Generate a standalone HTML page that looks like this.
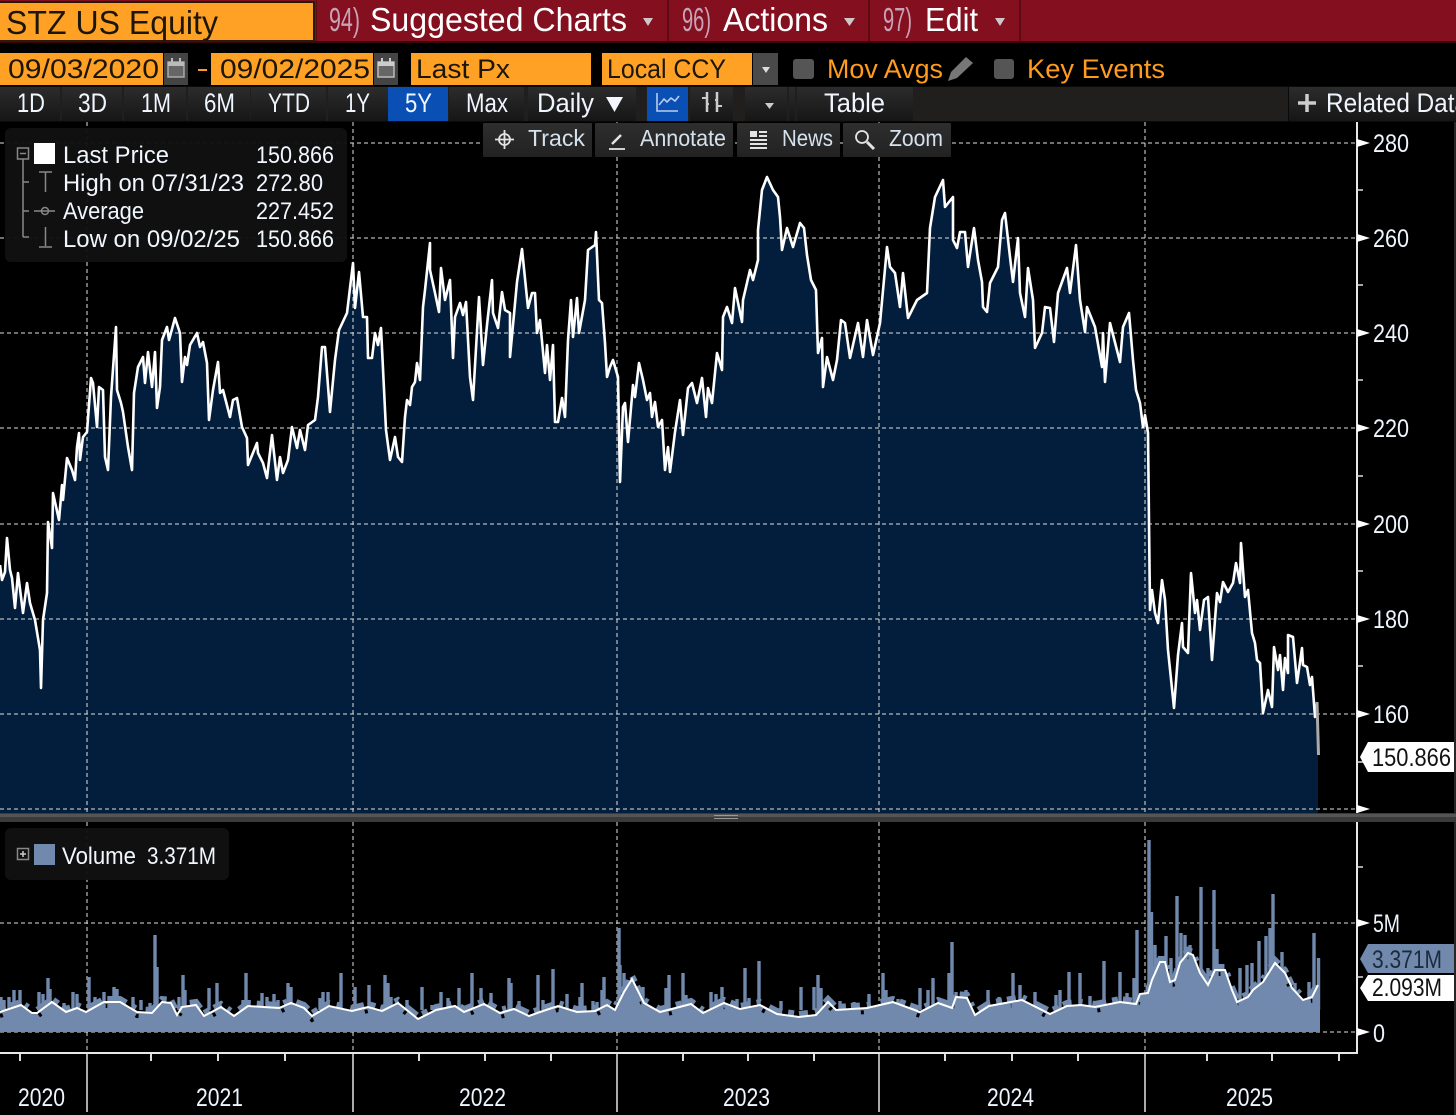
<!DOCTYPE html>
<html><head><meta charset="utf-8"><title>STZ US Equity</title>
<style>
html,body{margin:0;padding:0;background:#000;width:1456px;height:1115px;overflow:hidden}
svg{display:block}
text{font-family:"Liberation Sans",sans-serif}
.w{fill:#f4f8ff}
.o{fill:#1b1608;font-size:27px}
.a{fill:#ff9c1e;font-size:27px}
.t{fill:#fff;font-size:33px}
.p{fill:#c8a2b6;font-size:33px}
.b{fill:#f0f6ff;font-size:27px}
.k{fill:#d5e2ee;font-size:23px}
.l{fill:#f2f7ff;font-size:24px}
.x{fill:#eef5ff;font-size:25px}
</style></head><body>
<svg width="1456" height="1115" viewBox="0 0 1456 1115" xmlns="http://www.w3.org/2000/svg">
<defs>
<linearGradient id="g" x1="0" y1="0" x2="0" y2="1"><stop offset="0" stop-color="#2c2c2c"/><stop offset="1" stop-color="#161616"/></linearGradient>
<linearGradient id="h" x1="0" y1="0" x2="0" y2="1"><stop offset="0" stop-color="#2e2e2e"/><stop offset="1" stop-color="#222"/></linearGradient>
<polyline id="ma" fill="none" points="0,1012 21,1005 32,1013 37,1013 52,1002 66,1012 77,1008 86,1012 104,1002 120,1002 137,1012 152,1013 162,1002 171,1003 177,1015 182,1007 196,1005 204,1016 221,1007 234,1016 248,1006 279,1008 291,1003 304,1008 312,1016 329,1006 352,1011 368,1007 382,1011 398,1003 418,1019 436,1010 455,1006 464,1012 484,1004 500,1013 514,1009 529,1016 540,1012 558,1006 577,1012 595,1011 607,1005 615,1010 624,992 632,979 644,1003 660,1012 691,1004 703,1013 724,1003 740,1009 760,1005 777,1014 799,1017 816,1015 828,1002 836,1010 867,1008 893,1002 920,1012 938,1003 952,1008 956,997 967,998 975,1015 989,1006 1022,1000 1050,1014 1067,1006 1081,1005 1095,1007 1120,1002 1136,1004 1140,994 1148,993 1152,980 1160,962 1165,962 1170,982 1175,980 1180,963 1188,953 1193,955 1200,973 1208,985 1215,970 1225,970 1232,990 1237,1002 1248,997 1253,990 1263,982 1275,963 1285,973 1292,988 1303,1000 1312,997 1318,985"/>
</defs>
<rect width="1456" height="1115" fill="#000"/>

<!-- price fill -->
<polygon fill="#031e3c" points="0,813 0,565 2,580 5,572 7,538 10,570 12,578 15,608 18,573 23,613 27,583 30,603 35,620 40,650 41,688 43,620 47,593 48,522 52,548 53,493 59,520 62,485 63,500 67,458 72,470 75,480 77,447 79,433 80,460 83,437 87,432 91,378 93,383 97,427 99,387 103,390 105,457 108,470 111,397 116,327 117,390 121,403 123,412 128,447 132,470 134,393 138,367 143,357 145,383 148,352 152,387 155,352 157,408 160,387 162,340 167,327 169,340 175,318 180,333 182,382 185,357 187,365 190,345 197,333 200,347 203,342 207,363 209,420 213,390 218,362 220,393 223,390 230,417 233,400 237,398 242,427 247,438 248,465 257,443 258,453 263,463 267,478 272,435 277,480 280,457 283,473 288,460 292,427 297,448 300,430 305,450 308,425 315,420 318,397 322,347 325,347 330,412 335,360 339,330 347,313 353,263 355,308 359,272 363,317 367,317 368,358 372,358 375,333 378,345 381,328 386,430 390,460 395,437 398,457 402,462 405,417 407,400 410,405 412,387 415,382 417,363 420,380 423,307 425,290 430,243 430,270 435,293 439,312 441,268 445,300 450,280 453,358 455,317 460,303 463,315 466,302 470,377 473,400 479,297 483,365 487,325 492,280 493,313 498,328 502,292 505,310 510,313 510,357 517,282 522,249 528,308 532,293 535,293 537,333 540,320 545,373 547,345 550,380 553,345 555,422 558,422 562,398 565,417 568,340 571,300 573,337 577,298 579,333 585,300 588,250 595,245 596,232 599,300 602,303 605,343 607,377 610,367 613,360 618,377 620,482 623,407 625,403 628,442 633,385 635,397 639,363 643,380 647,400 650,393 652,417 655,402 658,427 662,420 665,470 668,447 670,472 675,432 680,400 683,435 688,388 692,383 697,403 702,378 706,417 708,388 712,403 717,353 722,370 723,317 727,307 732,323 735,288 742,322 743,300 750,270 753,280 758,260 758,230 762,190 767,177 773,190 778,197 780,217 782,250 787,228 793,247 800,223 804,228 807,255 811,280 816,290 818,353 822,338 823,387 827,357 833,380 837,360 841,320 845,323 850,358 858,323 863,357 867,320 873,355 880,323 887,247 890,267 895,273 900,307 903,273 908,318 917,300 927,293 930,228 935,197 943,180 945,207 953,197 953,240 957,248 960,232 965,232 968,267 974,228 978,260 982,282 983,307 987,312 990,283 998,267 1002,220 1005,213 1010,257 1013,282 1018,238 1020,293 1025,317 1028,268 1033,300 1035,348 1042,333 1045,307 1050,308 1054,342 1058,293 1067,268 1070,293 1076,245 1080,300 1085,332 1087,307 1095,327 1102,367 1103,333 1105,382 1110,323 1120,362 1123,327 1129,313 1133,360 1136,390 1140,403 1143,427 1145,415 1148,433 1150,610 1152,590 1155,613 1158,623 1162,580 1165,600 1168,650 1174,708 1178,655 1182,623 1183,647 1188,653 1191,573 1195,613 1197,600 1200,630 1204,600 1208,597 1212,660 1217,593 1220,602 1223,582 1228,592 1233,583 1236,563 1240,583 1241,543 1245,597 1248,590 1252,633 1255,643 1257,660 1260,663 1263,713 1268,690 1272,707 1274,647 1278,670 1280,655 1283,690 1285,658 1288,673 1288,635 1293,637 1297,683 1302,648 1303,665 1307,667 1310,685 1312,677 1315,717 1317,702 1318,755 1318,813"/>

<!-- grid -->
<g fill="none" stroke="#d0d0d0" stroke-opacity=".72" stroke-width="1.5" stroke-dasharray="4 3">
<path d="M0 143H1357M0 238H1357M0 333H1357M0 428H1357M0 524H1357M0 619H1357M0 714H1357M0 809H1357"/>
<path d="M87 122V813M353 122V813M617 122V813M879 122V813M1145 122V813"/>
<path d="M0 923H1357M0 1032H1357"/>
<path d="M87 822V1053M353 822V1053M617 822V1053M879 822V1053M1145 822V1053"/>
</g>

<!-- price line -->
<polyline fill="none" stroke="#fff" stroke-width="2.6" stroke-linejoin="round" points="0,565 2,580 5,572 7,538 10,570 12,578 15,608 18,573 23,613 27,583 30,603 35,620 40,650 41,688 43,620 47,593 48,522 52,548 53,493 59,520 62,485 63,500 67,458 72,470 75,480 77,447 79,433 80,460 83,437 87,432 91,378 93,383 97,427 99,387 103,390 105,457 108,470 111,397 116,327 117,390 121,403 123,412 128,447 132,470 134,393 138,367 143,357 145,383 148,352 152,387 155,352 157,408 160,387 162,340 167,327 169,340 175,318 180,333 182,382 185,357 187,365 190,345 197,333 200,347 203,342 207,363 209,420 213,390 218,362 220,393 223,390 230,417 233,400 237,398 242,427 247,438 248,465 257,443 258,453 263,463 267,478 272,435 277,480 280,457 283,473 288,460 292,427 297,448 300,430 305,450 308,425 315,420 318,397 322,347 325,347 330,412 335,360 339,330 347,313 353,263 355,308 359,272 363,317 367,317 368,358 372,358 375,333 378,345 381,328 386,430 390,460 395,437 398,457 402,462 405,417 407,400 410,405 412,387 415,382 417,363 420,380 423,307 425,290 430,243 430,270 435,293 439,312 441,268 445,300 450,280 453,358 455,317 460,303 463,315 466,302 470,377 473,400 479,297 483,365 487,325 492,280 493,313 498,328 502,292 505,310 510,313 510,357 517,282 522,249 528,308 532,293 535,293 537,333 540,320 545,373 547,345 550,380 553,345 555,422 558,422 562,398 565,417 568,340 571,300 573,337 577,298 579,333 585,300 588,250 595,245 596,232 599,300 602,303 605,343 607,377 610,367 613,360 618,377 620,482 623,407 625,403 628,442 633,385 635,397 639,363 643,380 647,400 650,393 652,417 655,402 658,427 662,420 665,470 668,447 670,472 675,432 680,400 683,435 688,388 692,383 697,403 702,378 706,417 708,388 712,403 717,353 722,370 723,317 727,307 732,323 735,288 742,322 743,300 750,270 753,280 758,260 758,230 762,190 767,177 773,190 778,197 780,217 782,250 787,228 793,247 800,223 804,228 807,255 811,280 816,290 818,353 822,338 823,387 827,357 833,380 837,360 841,320 845,323 850,358 858,323 863,357 867,320 873,355 880,323 887,247 890,267 895,273 900,307 903,273 908,318 917,300 927,293 930,228 935,197 943,180 945,207 953,197 953,240 957,248 960,232 965,232 968,267 974,228 978,260 982,282 983,307 987,312 990,283 998,267 1002,220 1005,213 1010,257 1013,282 1018,238 1020,293 1025,317 1028,268 1033,300 1035,348 1042,333 1045,307 1050,308 1054,342 1058,293 1067,268 1070,293 1076,245 1080,300 1085,332 1087,307 1095,327 1102,367 1103,333 1105,382 1110,323 1120,362 1123,327 1129,313 1133,360 1136,390 1140,403 1143,427 1145,415 1148,433 1150,610 1152,590 1155,613 1158,623 1162,580 1165,600 1168,650 1174,708 1178,655 1182,623 1183,647 1188,653 1191,573 1195,613 1197,600 1200,630 1204,600 1208,597 1212,660 1217,593 1220,602 1223,582 1228,592 1233,583 1236,563 1240,583 1241,543 1245,597 1248,590 1252,633 1255,643 1257,660 1260,663 1263,713 1268,690 1272,707 1274,647 1278,670 1280,655 1283,690 1285,658 1288,673 1288,635 1293,637 1297,683 1302,648 1303,665 1307,667 1310,685 1312,677 1315,717 1317,702"/>
<path d="M1317 702L1318.5 755" stroke="#aaa" stroke-width="3" fill="none"/>

<!-- volume body -->
<polygon fill="#7089ad" points="0,1032 0,1012 21,1005 32,1013 37,1013 52,1002 66,1012 77,1008 86,1012 104,1002 120,1002 137,1012 152,1013 162,1002 171,1003 177,1015 182,1007 196,1005 204,1016 221,1007 234,1016 248,1006 279,1008 291,1003 304,1008 312,1016 329,1006 352,1011 368,1007 382,1011 398,1003 418,1019 436,1010 455,1006 464,1012 484,1004 500,1013 514,1009 529,1016 540,1012 558,1006 577,1012 595,1011 607,1005 615,1010 624,992 632,979 644,1003 660,1012 691,1004 703,1013 724,1003 740,1009 760,1005 777,1014 799,1017 816,1015 828,1002 836,1010 867,1008 893,1002 920,1012 938,1003 952,1008 956,997 967,998 975,1015 989,1006 1022,1000 1050,1014 1067,1006 1081,1005 1095,1007 1120,1002 1136,1004 1140,994 1148,993 1152,980 1160,962 1165,962 1170,982 1175,980 1180,963 1188,953 1193,955 1200,973 1208,985 1215,970 1225,970 1232,990 1237,1002 1248,997 1253,990 1263,982 1275,963 1285,973 1292,988 1303,1000 1312,997 1318,985 1320,985 1320,1032"/>
<use href="#ma" transform="translate(0,-3)" stroke="#7089ad" stroke-width="6" stroke-dasharray="6 5 9 7 4 10 14 6"/>
<use href="#ma" transform="translate(0,4)" stroke="#000" stroke-width="4" stroke-dasharray="3 40 3 73 3 31 3 55"/>
<path fill="none" stroke="#7089ad" stroke-width="3.4" d="M1 1010V997M4 1010V1000M9 1010V997M14 1010V990M20 1010V990M39 1010V992M43 1010V994M48 1010V978M50 1010V989M64 1010V1003M73 1010V992M77 1010V994M89 1010V977M95 1010V997M104 1010V992M114 1010V987M117 1010V989M133 1010V997M141 1010V1000M150 1010V1003M155 1010V935M157 1010V967M179 1010V997M183 1010V975M185 1010V990M209 1010V988M217 1010V983M243 1010V1000M246 1010V973M262 1010V993M267 1010V997M274 1010V994M278 1010V1000M288 1010V983M291 1010V987M320 1010V998M323 1010V992M328 1010V992M341 1010V973M355 1010V987M369 1010V985M385 1010V975M388 1010V983M391 1010V997M407 1010V1000M422 1010V987M432 1010V1005M441 1010V992M448 1010V998M459 1010V988M472 1010V973M481 1010V988M491 1010V993M509 1010V978M511 1010V983M519 1010V1001M538 1010V975M543 1010V1000M553 1010V969M567 1010V994M580 1010V997M582 1010V983M593 1010V1001M597 1010V1002M602 1010V990M604 1010V977M619 1010V928M620 1010V965M624 1010V973M628 1010V980M643 1010V987M666 1010V988M669 1010V975M683 1010V973M686 1010V995M711 1010V992M716 1010V994M722 1010V987M737 1010V999M745 1010V968M749 1010V998M759 1010V961M781 1010V1001M801 1010V987M814 1010V987M818 1010V975M821 1010V988M840 1010V1001M854 1010V1002M869 1010V994M883 1010V973M886 1010V990M898 1010V999M920 1010V988M928 1010V990M933 1010V978M949 1010V973M952 1010V942M956 1010V992M966 1010V990M988 1010V990M999 1010V997M1009 1010V1000M1013 1010V973M1020 1010V985M1035 1010V992M1056 1010V995M1060 1010V990M1069 1010V972M1080 1010V973M1090 1010V996M1104 1010V961M1120 1010V972M1127 1010V993M1134 1010V978M1137 1010V930M1149 1010V840M1151.5 1010V912M1155 1010V945M1158 1010V958M1166 1010V936M1171 1010V958M1177 1010V896M1181 1010V933M1185 1010V935M1190 1010V945M1201 1010V887M1208 1010V968M1214 1010V890M1217 1010V949M1223 1010V980M1240 1010V968M1247 1010V965M1252 1010V963M1259 1010V941M1266 1010V936M1270 1010V928M1273 1010V894M1282 1010V952M1295 1010V983M1309 1010V982M1314 1010V933M1318.5 1010V958"/>
<use href="#ma" stroke="#fff" stroke-width="2"/>

<!-- axes -->
<rect x="1356" y="122" width="2" height="692" fill="#e8e8e8"/>
<rect x="1356" y="822" width="2" height="232" fill="#e8e8e8"/>
<rect x="0" y="1052" width="1358" height="2" fill="#e8e8e8"/>
<path fill="#fff" d="M1357 139l13 4-13 4zM1357 234l13 4-13 4zM1357 329l13 4-13 4zM1357 424l13 4-13 4zM1357 520l13 4-13 4zM1357 615l13 4-13 4zM1357 710l13 4-13 4zM1357 805l13 4-13 4zM1357 919l13 4-13 4zM1357 1028l13 4-13 4z"/>
<path stroke="#ddd" stroke-width="1.5" d="M1357 190h6M1357 285h6M1357 380h6M1357 476h6M1357 571h6M1357 666h6M1357 762h6M1357 867h6M1357 977h6"/>
<path stroke="#ddd" stroke-width="2" d="M20 1054v7M151 1054v7M218 1054v7M285 1054v7M419 1054v7M485 1054v7M551 1054v7M683 1054v7M748 1054v7M814 1054v7M945 1054v7M1012 1054v7M1078 1054v7M1207 1054v7M1272 1054v7M1339 1054v7"/>
<path stroke="#aaa" stroke-width="2" d="M87 1054v58M353 1054v58M617 1054v58M879 1054v58M1145 1054v58"/>
<rect x="1454" y="122" width="2" height="993" fill="#262626"/>

<!-- right labels -->
<g class="x">
<text class="x" x="1373" y="152" textLength="36" lengthAdjust="spacingAndGlyphs">280</text>
<text class="x" x="1373" y="247" textLength="36" lengthAdjust="spacingAndGlyphs">260</text>
<text class="x" x="1373" y="342" textLength="36" lengthAdjust="spacingAndGlyphs">240</text>
<text class="x" x="1373" y="437" textLength="36" lengthAdjust="spacingAndGlyphs">220</text>
<text class="x" x="1373" y="533" textLength="36" lengthAdjust="spacingAndGlyphs">200</text>
<text class="x" x="1373" y="628" textLength="36" lengthAdjust="spacingAndGlyphs">180</text>
<text class="x" x="1373" y="723" textLength="36" lengthAdjust="spacingAndGlyphs">160</text>
<text class="x" x="1373" y="932" textLength="27" lengthAdjust="spacingAndGlyphs">5M</text>
<text class="x" x="1373" y="1042" textLength="12" lengthAdjust="spacingAndGlyphs">0</text>
</g>
<polygon fill="#fff" points="1360,757 1368,742 1454,742 1454,772 1368,772"/>
<text x="1372" y="766" font-size="25" fill="#111" textLength="79" lengthAdjust="spacingAndGlyphs">150.866</text>
<polygon fill="#7089ad" points="1360,959 1368,944 1454,944 1454,973 1368,973"/>
<text x="1372" y="968" font-size="25" fill="#1c2a3e" textLength="70" lengthAdjust="spacingAndGlyphs">3.371M</text>
<polygon fill="#fff" points="1360,988 1368,975 1454,975 1454,1001 1368,1001"/>
<text x="1372" y="996" font-size="25" fill="#111" textLength="70" lengthAdjust="spacingAndGlyphs">2.093M</text>

<!-- year labels -->
<text class="x" x="18" y="1106" textLength="47" lengthAdjust="spacingAndGlyphs">2020</text>
<text class="x" x="196" y="1106" textLength="47" lengthAdjust="spacingAndGlyphs">2021</text>
<text class="x" x="459" y="1106" textLength="47" lengthAdjust="spacingAndGlyphs">2022</text>
<text class="x" x="723" y="1106" textLength="47" lengthAdjust="spacingAndGlyphs">2023</text>
<text class="x" x="987" y="1106" textLength="47" lengthAdjust="spacingAndGlyphs">2024</text>
<text class="x" x="1226" y="1106" textLength="47" lengthAdjust="spacingAndGlyphs">2025</text>

<!-- splitter -->
<rect x="0" y="813" width="1456" height="9" fill="#3a3a3a"/>
<rect x="0" y="814" width="1456" height="3" fill="#555"/>
<path stroke="#999" d="M714 815.5h24M714 818.5h24"/>

<!-- legend -->
<rect x="5" y="128" width="342" height="134" rx="6" fill="#111" fill-opacity=".96"/>
<g fill="none" stroke="#888" stroke-width="1.5">
<rect x="17.5" y="148" width="11" height="11"/><path d="M20 153.5h6M23 159v78M23 182h6M23 211h6M23 237h6"/>
<path d="M39 172h13M45.5 172v20"/>
<path d="M34 211h21"/><circle cx="45" cy="211" r="3.5"/>
<path d="M45.5 227v19M39 247h13"/>
</g>
<rect x="34" y="143" width="21" height="21" fill="#fff"/>
<text class="l" x="63" y="163" textLength="106" lengthAdjust="spacingAndGlyphs">Last Price</text>
<text class="l" x="63" y="191" textLength="181" lengthAdjust="spacingAndGlyphs">High on 07/31/23</text>
<text class="l" x="63" y="219" textLength="81" lengthAdjust="spacingAndGlyphs">Average</text>
<text class="l" x="63" y="247" textLength="177" lengthAdjust="spacingAndGlyphs">Low on 09/02/25</text>
<text class="l" x="256" y="163" textLength="78" lengthAdjust="spacingAndGlyphs">150.866</text>
<text class="l" x="256" y="191" textLength="67" lengthAdjust="spacingAndGlyphs">272.80</text>
<text class="l" x="256" y="219" textLength="78" lengthAdjust="spacingAndGlyphs">227.452</text>
<text class="l" x="256" y="247" textLength="78" lengthAdjust="spacingAndGlyphs">150.866</text>

<!-- volume legend -->
<rect x="5" y="828" width="224" height="52" rx="6" fill="#111" fill-opacity=".96"/>
<rect x="17.5" y="848.5" width="11" height="11" fill="none" stroke="#888" stroke-width="1.5"/>
<path stroke="#ccc" stroke-width="1.5" d="M20 854h6M23 851v6"/>
<rect x="34" y="844" width="21" height="21" fill="#7089ad"/>
<text class="l" x="62" y="864" textLength="74" lengthAdjust="spacingAndGlyphs">Volume</text>
<text class="l" x="147" y="864" textLength="69" lengthAdjust="spacingAndGlyphs">3.371M</text>

<!-- top bar -->
<rect x="0" y="0" width="1456" height="43" fill="#840f1f"/>
<rect x="316" y="0" width="1" height="43" fill="#5c0a14"/>
<rect x="667" y="0" width="2" height="41" fill="#5c0a14"/>
<rect x="868" y="0" width="2" height="41" fill="#5c0a14"/>
<rect x="1019" y="0" width="2" height="41" fill="#5c0a14"/>
<rect x="0" y="41" width="1456" height="2" fill="#3a060c"/>
<rect x="-1" y="2" width="315" height="39" fill="#ffa124" stroke="#2a1a05" stroke-width="2"/>
<text x="6" y="34" font-size="33" fill="#1b1608" textLength="212" lengthAdjust="spacingAndGlyphs">STZ US Equity</text>
<text class="p" x="329" y="31" textLength="31" lengthAdjust="spacingAndGlyphs">94)</text>
<text class="t" x="370" y="31" textLength="257" lengthAdjust="spacingAndGlyphs">Suggested Charts</text>
<text class="p" x="682" y="31" textLength="29" lengthAdjust="spacingAndGlyphs">96)</text>
<text class="t" x="723" y="31" textLength="105" lengthAdjust="spacingAndGlyphs">Actions</text>
<text class="p" x="883" y="31" textLength="29" lengthAdjust="spacingAndGlyphs">97)</text>
<text class="t" x="925" y="31" textLength="53" lengthAdjust="spacingAndGlyphs">Edit</text>
<path fill="#d0c8c8" d="M643 18h10l-5 8zM844 18h11l-5.500 8zM995 18h10l-5 8z"/>

<!-- row 2 -->
<rect x="0" y="53" width="163" height="32" fill="#ffa124"/>
<rect x="211" y="53" width="162" height="32" fill="#ffa124"/>
<rect x="411" y="53" width="180" height="32" fill="#ffa124"/>
<rect x="602" y="53" width="150" height="32" fill="#ffa124"/>
<rect x="164" y="53" width="24" height="32" fill="#444"/>
<rect x="374" y="53" width="24" height="32" fill="#444"/>
<rect x="753" y="53" width="25" height="32" fill="#4a4a4a"/>
<g>
<rect x="168" y="62" width="16" height="15" fill="#666" stroke="#aaa" stroke-width="1.5"/><rect x="168" y="62" width="16" height="4" fill="#bbb"/><path stroke="#bbb" stroke-width="2" d="M172 58v4M180 58v4"/>
<rect x="378" y="62" width="16" height="15" fill="#666" stroke="#bbb" stroke-width="1.5"/><rect x="378" y="62" width="16" height="4" fill="#ccc"/><path stroke="#ccc" stroke-width="2" d="M382 58v4M390 58v4"/>
</g>
<path fill="#ddd" d="M762 67h8l-4 6z"/>
<rect x="198" y="69" width="9" height="2" fill="#ff9c1e"/>
<text class="o" x="8" y="78" textLength="151" lengthAdjust="spacingAndGlyphs">09/03/2020</text>
<text class="o" x="220" y="78" textLength="150" lengthAdjust="spacingAndGlyphs">09/02/2025</text>
<text class="o" x="416" y="78" textLength="94" lengthAdjust="spacingAndGlyphs">Last Px</text>
<text class="o" x="607" y="78" textLength="119" lengthAdjust="spacingAndGlyphs">Local CCY</text>
<rect x="793" y="59" width="21" height="20" rx="3" fill="#555"/>
<rect x="994" y="59" width="20" height="20" rx="3" fill="#555"/>
<text class="a" x="827" y="78" textLength="116" lengthAdjust="spacingAndGlyphs">Mov Avgs</text>
<text class="a" x="1027" y="78" textLength="138" lengthAdjust="spacingAndGlyphs">Key Events</text>
<path fill="#777" d="M966 57l7 6-16 15-9 3 3-9z"/>

<!-- row 3 -->
<rect x="0" y="86" width="1456" height="36" fill="#0a0a0a"/>
<rect x="0" y="87" width="1288" height="34" fill="#201f1d"/>
<g fill="url(#g)">
<rect x="0" y="87" width="60" height="34"/><rect x="62" y="87" width="60" height="34"/><rect x="124" y="87" width="62" height="34"/><rect x="188" y="87" width="62" height="34"/><rect x="251" y="87" width="75" height="34"/><rect x="328" y="87" width="60" height="34"/>
<rect x="449" y="87" width="75" height="34"/><rect x="528" y="87" width="108" height="34"/><rect x="690" y="87" width="43" height="34"/><rect x="745" y="87" width="42" height="34"/><rect x="789" y="87" width="6" height="34"/><rect x="797" y="87" width="116" height="34"/><rect x="1289" y="87" width="167" height="34"/>
</g>
<rect x="388" y="87" width="60" height="34" fill="#0a50b4"/>
<rect x="647" y="87" width="41" height="34" fill="#0a50b4"/>
<g transform="translate(0,-1)">
<text class="b" x="17" y="113" textLength="28" lengthAdjust="spacingAndGlyphs">1D</text>
<text class="b" x="78" y="113" textLength="29" lengthAdjust="spacingAndGlyphs">3D</text>
<text class="b" x="141" y="113" textLength="30" lengthAdjust="spacingAndGlyphs">1M</text>
<text class="b" x="204" y="113" textLength="31" lengthAdjust="spacingAndGlyphs">6M</text>
<text class="b" x="268" y="113" textLength="42" lengthAdjust="spacingAndGlyphs">YTD</text>
<text class="b" x="345" y="113" textLength="25" lengthAdjust="spacingAndGlyphs">1Y</text>
<text class="b" x="405" y="113" textLength="27" lengthAdjust="spacingAndGlyphs">5Y</text>
<text class="b" x="466" y="113" textLength="42" lengthAdjust="spacingAndGlyphs">Max</text>
<text class="b" x="537" y="113" textLength="57" lengthAdjust="spacingAndGlyphs">Daily</text>
<text class="b" x="824" y="113" textLength="61" lengthAdjust="spacingAndGlyphs">Table</text>
<text class="b" x="1326" y="113" textLength="142" lengthAdjust="spacingAndGlyphs">Related Data</text>
</g>
<path fill="#f5f5ff" d="M606 97h17l-8.500 15z"/>
<path fill="none" stroke="#b9cdee" stroke-width="1.6" d="M657 93v18h21M659 105l5-6 3 3 4-4 4 3 4-5"/>
<path fill="none" stroke="#ccc" stroke-width="2.500" d="M707 92v20M717 92v20"/>
<path stroke="#ccc" stroke-width="2" d="M702 98h5M717 106h5M707 104h2M715 100h2"/>
<path fill="#ccc" d="M765 103h9l-4.500 6z"/>
<path stroke="#ccc" stroke-width="3.500" d="M1298 103h18M1307 94v18"/>

<!-- row 4 toolbar -->
<rect x="483" y="123" width="109" height="34" rx="1" fill="url(#h)"/>
<rect x="595" y="123" width="138" height="34" rx="1" fill="url(#h)"/>
<rect x="737" y="123" width="103" height="34" rx="1" fill="url(#h)"/>
<rect x="843" y="123" width="108" height="34" rx="1" fill="url(#h)"/>
<text class="k" x="528" y="146" textLength="57" lengthAdjust="spacingAndGlyphs">Track</text>
<text class="k" x="640" y="146" textLength="86" lengthAdjust="spacingAndGlyphs">Annotate</text>
<text class="k" x="782" y="146" textLength="51" lengthAdjust="spacingAndGlyphs">News</text>
<text class="k" x="889" y="146" textLength="54" lengthAdjust="spacingAndGlyphs">Zoom</text>
<g fill="none" stroke="#e4e4e4" stroke-width="1.8">
<circle cx="504.500" cy="139.500" r="5.500"/><path d="M495 139.500h19M504.500 130v19"/>
<path stroke-width="2.500" d="M612 144l9-9"/><path d="M609 149h16"/>
<circle cx="862" cy="137" r="6"/><path stroke-width="3" d="M867 142l7 7"/>
</g>
<path fill="#e4e4e4" d="M750 131h7v6h-7zM759 131h8v2h-8zM759 135h8v2h-8zM750 139h17v2h-17zM750 143h17v2h-17zM750 147h17v2h-17z"/>
</svg>
</body></html>
